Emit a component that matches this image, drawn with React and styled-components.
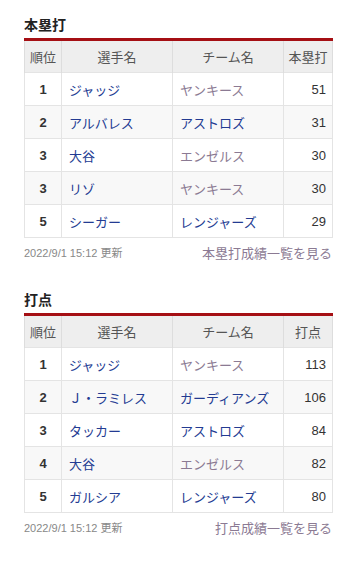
import React from 'react';
import styled, { createGlobalStyle } from 'styled-components';

const GlobalStyle = createGlobalStyle`
  body {
    margin: 0;
    background: #fff;
    font-family: "Liberation Sans", Arial, "Noto Sans CJK JP", sans-serif;
  }
`;

const Page = styled.div`
  padding: 17px 11px 0 24px;
  width: 308px;
`;

const Section = styled.section`
  margin-bottom: 26px;
`;

const Heading = styled.h2`
  margin: 0 0 4px;
  font-size: 14px;
  line-height: 17px;
  font-weight: bold;
  color: #222;
`;

const Table = styled.table`
  width: 308px;
  border-collapse: collapse;
  border-top: 3px solid #a50f14;
  table-layout: fixed;
  font-size: 13px;
`;

const Th = styled.th`
  height: 31px;
  padding: 0 4px;
  background: #eeeeee;
  color: #555;
  font-weight: normal;
  text-align: center;
  border-left: 1px solid #dddddd;
  border-right: 1px solid #dddddd;
`;

const Row = styled.tr`
  background: ${p => (p.$striped ? '#f8f8f8' : '#fff')};
`;

const Td = styled.td`
  height: 32px;
  padding: 0 ${p => p.$pad || '7px'};
  border: 1px solid #e4e4e4;
  text-align: ${p => p.$align || 'left'};
  font-weight: ${p => (p.$bold ? 'bold' : 'normal')};
  color: ${p => p.$color || '#333'};
  white-space: nowrap;
`;

const Footer = styled.div`
  display: flex;
  justify-content: space-between;
  align-items: center;
  height: 28px;
`;

const Updated = styled.span`
  font-size: 11px;
  color: #888;
`;

const MoreLink = styled.a`
  font-size: 13px;
  color: #8b7a93;
  text-decoration: none;
`;

const BLUE = '#233b92';
const VISITED = '#8b7a93';

const homers = [
  { rank: 1, name: 'ジャッジ', team: 'ヤンキース', teamVisited: true, value: 51 },
  { rank: 2, name: 'アルバレス', team: 'アストロズ', value: 31 },
  { rank: 3, name: '大谷', team: 'エンゼルス', teamVisited: true, value: 30 },
  { rank: 3, name: 'リゾ', team: 'ヤンキース', teamVisited: true, value: 30 },
  { rank: 5, name: 'シーガー', team: 'レンジャーズ', value: 29 },
];

const rbi = [
  { rank: 1, name: 'ジャッジ', team: 'ヤンキース', teamVisited: true, value: 113 },
  { rank: 2, name: 'Ｊ・ラミレス', team: 'ガーディアンズ', value: 106 },
  { rank: 3, name: 'タッカー', team: 'アストロズ', value: 84 },
  { rank: 4, name: '大谷', team: 'エンゼルス', teamVisited: true, value: 82 },
  { rank: 5, name: 'ガルシア', team: 'レンジャーズ', value: 80 },
];

function RankingTable({ title, stat, rows, more }) {
  return (
    <Section>
      <Heading>{title}</Heading>
      <Table>
        <colgroup>
          <col style={{ width: 37 }} />
          <col style={{ width: 111 }} />
          <col style={{ width: 111 }} />
          <col style={{ width: 49 }} />
        </colgroup>
        <thead>
          <tr>
            <Th>順位</Th>
            <Th>選手名</Th>
            <Th>チーム名</Th>
            <Th>{stat}</Th>
          </tr>
        </thead>
        <tbody>
          {rows.map((r, i) => (
            <Row key={i} $striped={i % 2 === 1}>
              <Td $align="center" $bold $pad="0">{r.rank}</Td>
              <Td $color={BLUE}>{r.name}</Td>
              <Td $color={r.teamVisited ? VISITED : BLUE}>{r.team}</Td>
              <Td $align="right" $pad="6px">{r.value}</Td>
            </Row>
          ))}
        </tbody>
      </Table>
      <Footer>
        <Updated>2022/9/1 15:12 更新</Updated>
        <MoreLink href="#">{more}</MoreLink>
      </Footer>
    </Section>
  );
}

export default function App() {
  return (
    <>
      <GlobalStyle />
      <Page>
        <RankingTable title="本塁打" stat="本塁打" rows={homers} more="本塁打成績一覧を見る" />
        <RankingTable title="打点" stat="打点" rows={rbi} more="打点成績一覧を見る" />
      </Page>
    </>
  );
}
